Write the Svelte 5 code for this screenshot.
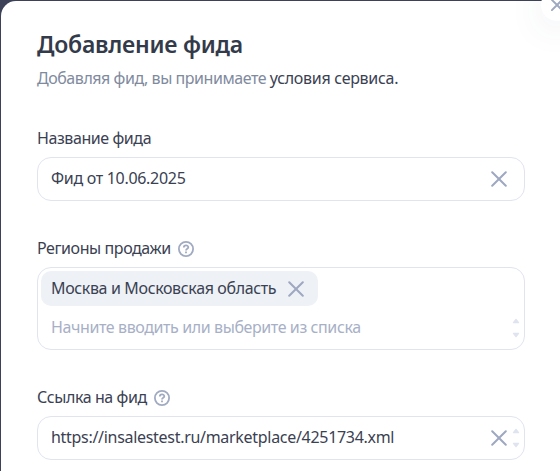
<script>
  let name = 'Фид от 10.06.2025';
  let regions = ['Москва и Московская область'];
  let query = '';
  let link = 'https://insalestest.ru/marketplace/4251734.xml';

  function removeRegion(region) {
    regions = regions.filter((r) => r !== region);
  }
</script>

{#snippet cross()}
  <svg class="cross" viewBox="0 0 16 16" width="16" height="16" aria-hidden="true">
    <path d="M1.2 1.2 L14.8 14.8 M14.8 1.2 L1.2 14.8" />
  </svg>
{/snippet}

{#snippet help()}
  <svg class="help" viewBox="0 0 16 16" width="16" height="16" aria-hidden="true">
    <circle cx="8" cy="8" r="7.1" />
    <path d="M5.8 6.6 C5.8 3.7 10.3 3.8 10.3 6.3 C10.3 7.8 8 7.7 8 9.5" />
    <path d="M8 10.6 V12.3" />
  </svg>
{/snippet}

{#snippet steps()}
  <svg class="steps" viewBox="0 0 8 20" width="8" height="20" aria-hidden="true">
    <path d="M4 1.4 L6.5 4.6 H1.5 Z M4 18.6 L6.5 15.4 H1.5 Z" />
  </svg>
{/snippet}

<div class="page">
  <form class="modal" on:submit|preventDefault>
    <h1>Добавление фида</h1>
    <p class="terms"><span>Добавляя фид, вы принимаете</span> <a href="#terms">условия сервиса</a>.</p>

    <section>
      <label class="label" for="name">Название фида</label>
      <div class="field">
        <input id="name" bind:value={name} />
        <button type="button" aria-label="Очистить" on:click={() => (name = '')}>{@render cross()}</button>
      </div>
    </section>

    <section>
      <label class="label" for="regions"><span>Регионы продажи</span>{@render help()}</label>
      <div class="field multi">
        {#each regions as region}
          <div class="tag">
            <span>{region}</span>
            <button type="button" aria-label="Удалить" on:click={() => removeRegion(region)}>{@render cross()}</button>
          </div>
        {/each}
        <div class="row">
          <input id="regions" class="query" placeholder="Начните вводить или выберите из списка" bind:value={query} />
          {@render steps()}
        </div>
      </div>
    </section>

    <section>
      <label class="label" for="link"><span>Ссылка на фид</span>{@render help()}</label>
      <div class="field stepped">
        <input id="link" bind:value={link} />
        <button type="button" aria-label="Очистить" on:click={() => (link = '')}>{@render cross()}</button>
        {@render steps()}
      </div>
    </section>
  </form>
  <button class="close" aria-label="Закрыть">{@render cross()}</button>
</div>

<style>
  :global(body) {
    overflow: hidden;
    background: #3d4258;
  }
  .page {
    position: relative;
    box-sizing: border-box;
    height: 471px;
    padding: 1px 0 0 1px;
    overflow: hidden;
    font: 16px/20px 'Noto Sans', sans-serif;
    color: #3a4152;
  }
  .modal {
    box-sizing: border-box;
    height: 520px;
    padding: 29px 35px 0 36px;
    background: #fff;
    border-radius: 15px 0 0 0;
  }
  h1 {
    margin: 0;
    font-size: 23px;
    font-weight: 600;
    line-height: 28px;
    letter-spacing: -0.23px;
    white-space: nowrap;
    color: #333a4a;
  }
  .terms {
    margin: 10px 0 0;
    white-space: nowrap;
    letter-spacing: -0.45px;
  }
  .terms span { color: #808a9e; }
  .terms a {
    color: inherit;
    text-decoration: none;
    letter-spacing: -0.3px;
  }
  section { margin-top: 40px; }
  section + section { margin-top: 37px; }
  .label {
    display: flex;
    align-items: center;
    gap: 7px;
    height: 20px;
    letter-spacing: -0.42px;
    white-space: nowrap;
  }
  .help { margin-top: 2px; }
  .field {
    display: flex;
    align-items: center;
    box-sizing: border-box;
    height: 44px;
    margin-top: 9px;
    padding: 0 17px 0 13px;
    border: 1px solid #e1e4ef;
    border-radius: 14px;
  }
  .stepped { padding-right: 4px; }
  .stepped .steps { margin-left: 5px; }
  .multi {
    flex-direction: column;
    align-items: stretch;
    height: 83px;
    padding: 3px 4px 3px 3px;
  }
  input {
    flex: 1;
    min-width: 0;
    height: 24px;
    padding: 0 0 2px;
    border: 0;
    outline: 0;
    background: none;
    font: inherit;
    color: inherit;
    letter-spacing: -0.3px;
  }
  .query { letter-spacing: -0.4px; }
  input::placeholder { color: #a7b0c6; opacity: 1; }
  button {
    display: flex;
    padding: 0;
    border: 0;
    background: none;
    cursor: pointer;
  }
  .tag {
    display: flex;
    align-items: center;
    justify-content: space-between;
    box-sizing: border-box;
    width: 277px;
    height: 36px;
    padding: 0 14px 0 10px;
    border-radius: 10px;
    background: #eef1f6;
    white-space: nowrap;
    letter-spacing: -0.36px;
  }
  .tag span { padding-bottom: 2px; }
  .row {
    display: flex;
    align-items: center;
    height: 38px;
    padding: 3px 0 0 10px;
  }
  .cross {
    fill: none;
    stroke: #9ea8c0;
    stroke-width: 2;
    stroke-linecap: round;
  }
  .help {
    fill: none;
    stroke: #a0aac1;
    stroke-width: 1.8;
  }
  .steps {
    fill: #e0e4ef;
    stroke: #e0e4ef;
    stroke-width: 1.4;
    stroke-linejoin: round;
  }
  .close {
    position: absolute;
    top: -11px;
    left: 541px;
    align-items: center;
    justify-content: center;
    width: 32px;
    height: 32px;
    border-radius: 50%;
    background: #fff;
    box-shadow: 0 6px 36px rgba(60, 75, 120, 0.1);
  }
  .close .cross {
    width: 12px;
    height: 12px;
    stroke-width: 2.6;
  }
</style>
